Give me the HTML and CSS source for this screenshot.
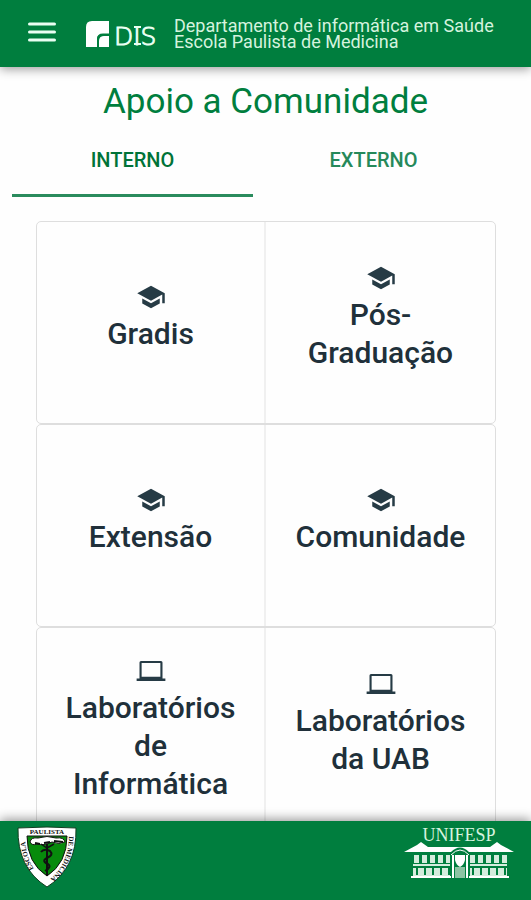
FILE: index.html
```
<!DOCTYPE html>
<html lang="pt-BR">
<head>
    <meta charset="UTF-8">
    <meta name="viewport" content="width=device-width, initial-scale=1.0">
    <title>Apoio a Comunidade</title>
    <link rel="stylesheet" href="styles.css">
</head>
<body>

    <!-- Icons shared by the cards -->
    <svg class="icon-defs" aria-hidden="true">
        <symbol id="icon-school" viewBox="0 0 24 24">
            <path d="M5 13.18v4L12 21l7-3.82v-4L12 17l-7-3.82zM12 3L1 9l11 6 9-4.91V17h2V9L12 3z"/>
        </symbol>
        <symbol id="icon-laptop" viewBox="0 0 24 24">
            <path d="M4 4h16q1.200 0 1.200 1.200V18H23.500v2H.5v-2H2.800V5.200Q2.800 4 4 4zM4.500 5.500v11h15v-11z" fill-rule="evenodd"/>
        </symbol>
    </svg>

    <header class="header">
        <button type="button" class="menu-button" aria-label="Abrir menu">
            <svg viewBox="0 0 28 20" width="28" height="20"><path d="M1.500 2h25M1.500 10h25M1.500 18h25"/></svg>
        </button>
        <a class="logo" href="#" aria-label="DIS">
            <svg viewBox="0 0 74 28" width="74" height="28">
                <path class="logo-mark" d="M6 1H23V13.500H17Q11 13.500 11 19V27H0V7Q0 1 6 1zM18 16H23V27H13V21Q13 16 18 16z"/>
                <path class="logo-mark-line" d="M12 27V19.500Q12 15 17 15H23"/>
                <text class="logo-text" x="28" y="25">DIS</text>
                <!-- serifs of the I -->
                <path class="logo-serif" d="M48 7h7M48 24h7"/>
            </svg>
        </a>
        <p class="header-text">Departamento de informática em Saúde<br>Escola Paulista de Medicina</p>
    </header>

    <main class="content">
        <h1 class="title">Apoio a Comunidade</h1>

        <div class="tabs" role="tablist">
            <button type="button" class="tab active" role="tab" aria-selected="true">INTERNO</button>
            <button type="button" class="tab" role="tab" aria-selected="false">EXTERNO</button>
        </div>

        <div class="cards">
            <div class="card-row">
                <a class="card" href="#"><svg class="card-icon"><use href="#icon-school"/></svg><span>Gradis</span></a>
                <a class="card" href="#"><svg class="card-icon"><use href="#icon-school"/></svg><span>Pós-<br>Graduação</span></a>
            </div>
            <div class="card-row">
                <a class="card" href="#"><svg class="card-icon"><use href="#icon-school"/></svg><span>Extensão</span></a>
                <a class="card" href="#"><svg class="card-icon"><use href="#icon-school"/></svg><span>Comunidade</span></a>
            </div>
            <div class="card-row">
                <a class="card" href="#"><svg class="card-icon"><use href="#icon-laptop"/></svg><span>Laboratórios<br>de<br>Informática</span></a>
                <a class="card" href="#"><svg class="card-icon"><use href="#icon-laptop"/></svg><span>Laboratórios<br>da UAB</span></a>
            </div>
        </div>
    </main>

    <footer class="footer">
        <!-- Escola Paulista de Medicina crest -->
        <svg class="crest" viewBox="0 0 60 62" width="60" height="62" role="img" aria-label="Escola Paulista de Medicina">
            <defs>
                <path id="crest-left" d="M26 53Q8 38 8 9"/>
                <path id="crest-right" d="M52 9Q52 38 32 54"/>
            </defs>
            <path d="M1 2Q30 0 59 2Q60 42 30 61Q0 42 1 2z" fill="#fff" stroke="#123d20"/>
            <path d="M10 10H50Q50 37 30 50Q10 37 10 10z" fill="#078b0c" stroke="#111"/>
            <path d="M13 16Q14 11 21 12Q30 9 39 12Q47 11 48 16Q42 19 35 16Q26 20 20 18Q15 20 13 16z" fill="#fff" stroke="#111"/>
            <path d="M18 17l5 1M27 17l6-1M37 15l9 1" fill="none" stroke="#111" stroke-width="2"/>
            <path d="M24 18l6 4 7-4" fill="none" stroke="#111" stroke-width="1.500"/>
            <path d="M30 18V50" stroke="#111" stroke-width="2"/>
            <path d="M24 26Q27 22 33 25Q37 29 30 32Q24 35 31 38Q35 41 28 45" fill="none" stroke="#111" stroke-width="2"/>
            <text class="crest-text" x="30" y="8" text-anchor="middle">PAULISTA</text>
            <text class="crest-text"><textPath href="#crest-left" startOffset="14">ESCOLA</textPath></text>
            <text class="crest-text"><textPath href="#crest-right" startOffset="1">DE MEDICINA</textPath></text>
        </svg>

        <!-- Unifesp building -->
        <svg class="unifesp" viewBox="0 0 110 54" width="110" height="54" role="img" aria-label="Unifesp">
            <defs>
                <pattern id="windows" width="8" height="24" patternUnits="userSpaceOnUse" x="9" y="28">
                    <path d="M1 1h5v8H1zM0 10h8v2H0zM0 14h3v7H0zM5 14h3v7H5zM0 21h8v3H0z" fill="#d5ecdd"/>
                </pattern>
            </defs>
            <text class="unifesp-text" x="55" y="15" text-anchor="middle">UNIFESP</text>
            <path d="M0 26L13 19L17 16L24 21H86L93 16L97 19L110 26H65Q56 17 47 26H0z" fill="#fff"/>
            <path d="M47 29Q56 19 65 29" fill="none" stroke="#fff"/>
            <path fill="url(#windows)" d="M9 28h37v24H9zM66 28h37v24H66z"/>
            <path d="M51 29h10v5q-1 5-5 7-4-2-5-7z" fill="#fff"/>
            <path d="M51 41h10v11h-10z" fill="#8dc4a3"/>
            <path d="M49 29v23M63 29v23M7 51h40M65 51h40" stroke="#fff" stroke-width="2"/>
        </svg>
    </footer>

</body>
</html>
```

FILE: styles.css
```
* {
    box-sizing: border-box;
}

body {
    margin: 0;
    height: 100vh;
    display: flex;
    flex-direction: column;
    overflow: hidden;
    background-color: #fefefe;
    font-family: Roboto, "Liberation Sans", sans-serif;
}

button {
    border: none;
    background: none;
    padding: 0;
    font-family: inherit;
    cursor: pointer;
}

.icon-defs {
    display: none;
}

/* Header */
.header {
    flex: none;
    display: flex;
    align-items: center;
    padding: 18px 24px 17px 28px;
    background-color: #007e3e;
    box-shadow: 0 2px 10px rgba(0, 0, 0, 0.4);
    z-index: 1;
}

.menu-button {
    height: 28px;
    margin-right: 30px;
    padding-bottom: 5px;
}

.menu-button svg {
    display: block;
    stroke: #e9fff2;
    stroke-width: 3;
    stroke-linecap: round;
}

.logo {
    margin-right: 14px;
}

.logo svg {
    display: block;
}

.logo-mark {
    fill: #fff;
}

.logo-mark-line {
    fill: none;
    stroke: #007e3e;
    stroke-width: 2;
}

.logo-text {
    fill: #e9fff2;
    stroke: #e9fff2;
    stroke-width: 1;
    font-family: "DejaVu Sans", sans-serif;
    font-size: 25px;
    font-weight: 200;
}

.logo-serif {
    stroke: #e9fff2;
    stroke-width: 2;
}

.header-text {
    margin: 0;
    color: #d5f3df;
    font-size: 18px;
    line-height: 16px;
    white-space: nowrap;
}

/* Content */
.content {
    flex: 1;
    min-height: 0;
    overflow: hidden;
}

.title {
    margin: 0;
    padding-top: 14px;
    color: #007e3e;
    font-size: 35px;
    font-weight: 400;
    line-height: 42px;
    text-align: center;
}

.tabs {
    display: flex;
    padding: 0 37px 0 12px;
}

.tab {
    flex: 1;
    height: 74px;
    padding-top: 3px;
    border-bottom: 3px solid transparent;
    color: #25895a;
    font-size: 20px;
    font-weight: 500;
}

.tab.active {
    border-color: #2a8b5d;
    color: #007338;
}

.cards {
    margin: 24px 35px 0 36px;
}

.card-row {
    display: grid;
    grid-template-columns: 1fr 1fr;
    grid-auto-rows: 201px;
    border: 1px solid #dedede;
    border-radius: 5px;
}

.card {
    display: flex;
    flex-direction: column;
    align-items: center;
    justify-content: safe center;
    padding: 28px 8px 38px;
    color: #20303a;
    font-size: 30px;
    font-weight: 500;
    line-height: 38px;
    text-align: center;
    text-decoration: none;
}

.card:first-child {
    border-right: 2px solid #f0f0f0;
}

.card-icon {
    flex: none;
    width: 30px;
    height: 30px;
    margin-bottom: 3px;
    fill: #263b45;
}

/* Footer */
.footer {
    flex: none;
    display: flex;
    justify-content: space-between;
    align-items: flex-start;
    height: 79px;
    padding: 5px 17px 0 17px;
    background-color: #007e3e;
    box-shadow: 0 -2px 10px rgba(0, 0, 0, 0.4);
    z-index: 1;
}

.crest-text {
    fill: #111;
    font-family: "Liberation Serif", serif;
    font-size: 7px;
    font-weight: 700;
}

.unifesp-text {
    fill: #d5f3df;
    font-family: "Liberation Serif", serif;
    font-size: 18px;
}
```
